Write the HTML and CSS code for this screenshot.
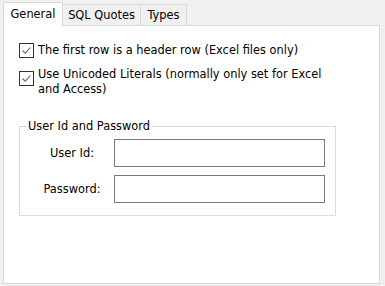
FILE: index.html
```html
<!DOCTYPE html>
<html>
<head>
<meta charset="utf-8">
<link rel="stylesheet" href="styles.css">
</head>
<body>
<div class="dlg">
  <div class="tabs">
    <div class="tab tab-active tab-general">General</div>
    <div class="tab tab-sql">SQL Quotes</div>
    <div class="tab tab-types">Types</div>
  </div>
  <div class="panel">
    <label class="check">
      <span class="box"><svg width="11" height="11" viewBox="0 0 11 11"><path d="M1.5 5.5 L4.2 8.2 L9.5 2.5" fill="none" stroke="#666" stroke-width="1.1"/></svg></span>
      <span class="check-text">The first row is a header row (Excel files only)</span>
    </label>
    <label class="check check-two">
      <span class="box"><svg width="11" height="11" viewBox="0 0 11 11"><path d="M1.5 5.5 L4.2 8.2 L9.5 2.5" fill="none" stroke="#666" stroke-width="1.1"/></svg></span>
      <span class="check-text wrap">Use Unicoded Literals (normally only set for Excel and Access)</span>
    </label>
    <fieldset class="group">
      <legend class="legend">User Id and Password</legend>
      <div class="row">
        <span class="lbl">User Id:</span>
        <span class="input"></span>
      </div>
      <div class="row">
        <span class="lbl">Password:</span>
        <span class="input"></span>
      </div>
    </fieldset>
  </div>
</div>
</body>
</html>
```
FILE: styles.css
```css
html, body {
  margin: 0;
  padding: 0;
  background: #f0f0f0;
}
body {
  width: 385px;
  height: 286px;
  overflow: hidden;
  font-family: "DejaVu Sans", "Liberation Sans", sans-serif;
  font-size: 11.4px;
  color: #000;
}
.dlg {
  padding: 2px 5px 0 3px;
}
.tabs {
  display: flex;
  align-items: flex-start;
  height: 24px;
  margin-bottom: -1px;
  position: relative;
  z-index: 1;
}
.tab {
  box-sizing: border-box;
  height: 21px;
  margin-top: 2px;
  margin-left: -1px;
  border: 1px solid #d9d9d9;
  border-bottom: none;
  background: #f0f0f0;
  padding-top: 2px;
  line-height: 16px;
  text-align: center;
}
.tab-active {
  margin-left: 0;
  margin-top: 0;
  height: 24px;
  background: #fff;
  padding-top: 3px;
  position: relative;
  z-index: 2;
}
.tab-general { width: 60px; }
.tab-sql { width: 79px; }
.tab-types { width: 47px; }
.panel {
  box-sizing: border-box;
  height: 259px;
  background: #fff;
  border: 1px solid #d9d9d9;
  padding: 17px 0 0 15px;
}
.check {
  display: flex;
  align-items: flex-start;
  gap: 4px;
}
.check-two {
  margin-top: 13px;
}
.box {
  box-sizing: border-box;
  width: 15px;
  height: 15px;
  border: 1px solid #333;
  display: flex;
  align-items: center;
  justify-content: center;
  background: #fff;
  flex: none;
}
.check-text {
  line-height: 15px;
}
.wrap {
  width: 300px;
  margin-top: -4px;
}
.group {
  box-sizing: border-box;
  width: 317px;
  margin: 22px 0 0 0;
  padding: 6px 10px 12px 0;
  border: 1px solid #dcdcdc;
}
.legend {
  padding: 0 1px;
  margin-left: 7px;
  line-height: 14px;
}
.row {
  display: flex;
  align-items: center;
  margin-bottom: 8px;
}
.row:last-child {
  margin-bottom: 0;
}
.lbl {
  box-sizing: border-box;
  width: 94px;
  padding-left: 10px;
  text-align: center;
}
.input {
  box-sizing: border-box;
  width: 211px;
  height: 28px;
  border: 1px solid #7a7a7a;
  background: #fff;
}
```
